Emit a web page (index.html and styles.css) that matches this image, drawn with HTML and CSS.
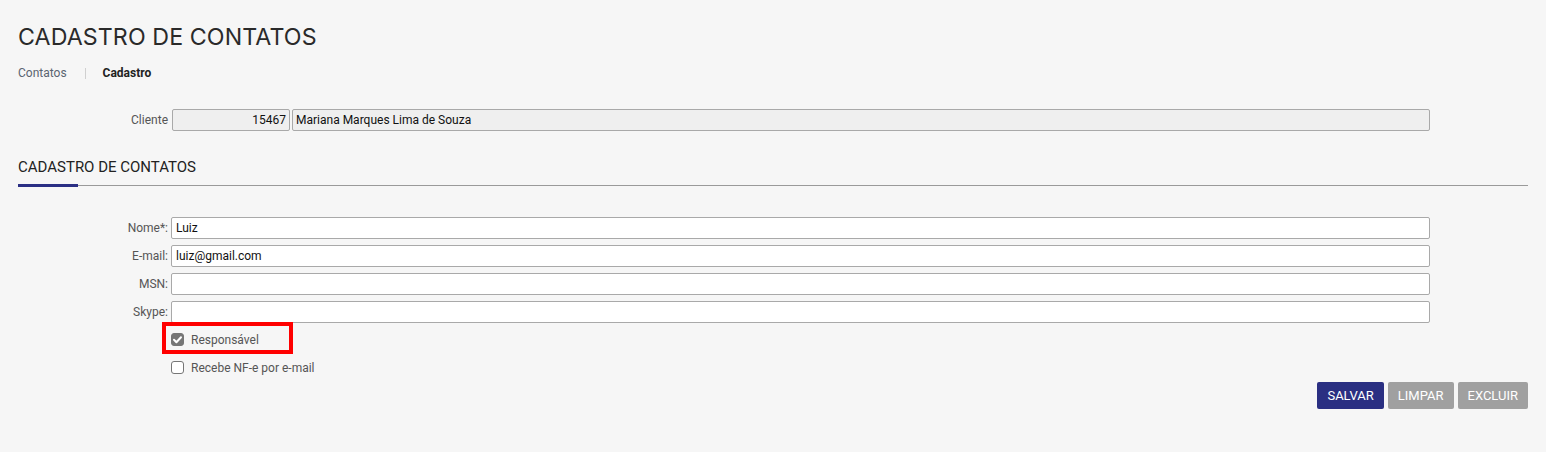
FILE: index.html
```html
<!DOCTYPE html>
<html lang="pt-BR">
<head>
<meta charset="utf-8">
<title>Cadastro de Contatos</title>
<link rel="stylesheet" href="styles.css">
</head>
<body>
<div class="page">
  <h1 class="title">CADASTRO DE CONTATOS</h1>
  <nav class="crumbs">
    <span class="crumb">Contatos</span>
    <span class="sep"></span>
    <span class="crumb current">Cadastro</span>
  </nav>

  <div class="client-row">
    <label class="lbl">Cliente</label>
    <div class="field code">15467</div>
    <div class="field name">Mariana Marques Lima de Souza</div>
  </div>

  <div class="section">
    <div class="section-title">CADASTRO DE CONTATOS</div>
  </div>

  <div class="form">
    <label class="lbl">Nome*:</label>
    <div class="input">Luiz</div>
    <label class="lbl">E-mail:</label>
    <div class="input">luiz@gmail.com</div>
    <label class="lbl">MSN:</label>
    <div class="input"></div>
    <label class="lbl">Skype:</label>
    <div class="input"></div>
    <div class="checks">
      <div class="check-row highlighted">
        <span class="box checked"><svg viewBox="0 0 13 13" width="13" height="13"><path d="M3 6.8 L5.4 9.2 L10 4.2" fill="none" stroke="#fff" stroke-width="2" stroke-linecap="round" stroke-linejoin="round"/></svg></span>
        <span class="check-text">Responsável</span>
        <span class="mark"></span>
      </div>
      <div class="check-row">
        <span class="box"></span>
        <span class="check-text">Recebe NF-e por e-mail</span>
      </div>
    </div>
  </div>

  <div class="actions">
    <button class="btn primary">SALVAR</button>
    <button class="btn">LIMPAR</button>
    <button class="btn">EXCLUIR</button>
  </div>
</div>
</body>
</html>
```

FILE: styles.css
```css
* { box-sizing: border-box; }
html, body { margin: 0; padding: 0; }
body {
  background: #f6f6f6;
  font-family: Roboto, "Liberation Sans", sans-serif;
  color: #222;
}
.page {
  padding: 23px 18px 0 18px;
}
.title {
  margin: 0;
  font-family: Inter, "Noto Sans", sans-serif;
  font-weight: 400;
  font-size: 23.2px;
  line-height: 28px;
  color: #2a2a2a;
  letter-spacing: 0.1px;
}
.crumbs {
  display: flex;
  align-items: center;
  margin-top: 15px;
  font-family: Roboto, "Liberation Sans", sans-serif;
  font-size: 12px;
  line-height: 14px;
}
.crumb { color: #5a6470; }
.crumb.current { color: #222; font-weight: 700; }
.sep {
  width: 1px;
  height: 11px;
  background: #d0d0d0;
  margin: 0 17px 0 18px;
}
.client-row {
  display: flex;
  align-items: center;
  margin-top: 29px;
  width: 1412px;
}
.lbl {
  font-size: 12px;
  color: #555;
  text-align: right;
}
.client-row .lbl {
  width: 150px;
  margin-right: 4px;
}
.field {
  height: 22px;
  border: 1px solid #a9a9a9;
  border-radius: 2px;
  background: #efefef;
  font-size: 12px;
  line-height: 20px;
  padding: 0 3px;
  color: #111;
}
.field.code { width: 118px; text-align: right; }
.field.name { flex: 1; margin-left: 2px; }

.section {
  margin-top: 27px;
  border-bottom: 1px solid #9a9a9a;
}
.section-title {
  font-size: 15px;
  line-height: 18px;
  color: #222;
  padding-bottom: 8px;
  width: 60px;
  white-space: nowrap;
  border-bottom: 3px solid #2b2f84;
  margin-bottom: -2px;
}

.form {
  display: grid;
  grid-template-columns: 150px 1fr;
  column-gap: 3px;
  row-gap: 6px;
  width: 1412px;
  margin-top: 31px;
  align-items: center;
}
.input {
  height: 22px;
  border: 1px solid #a9a9a9;
  border-radius: 2px;
  background: #fff;
  font-size: 12px;
  line-height: 20px;
  padding: 0 4px;
  color: #111;
}
.checks {
  grid-column: 2;
  display: flex;
  flex-direction: column;
  gap: 15px;
  margin-top: 4px;
}
.check-row {
  display: flex;
  align-items: center;
  height: 13px;
  position: relative;
}
.box {
  width: 13px;
  height: 13px;
  border: 1px solid #767676;
  border-radius: 3px;
  background: #fff;
  display: block;
}
.box.checked {
  background: #767676;
  border-color: #767676;
}
.box svg { display: block; margin: -1px; }
.check-text {
  margin-left: 7px;
  font-size: 12px;
  color: #555;
}
.mark {
  position: absolute;
  left: -9px;
  top: -11px;
  width: 131px;
  height: 32px;
  border: 4px solid #f00;
}
.actions {
  display: flex;
  justify-content: flex-end;
  gap: 4px;
  margin-top: 8px;
}
.btn {
  height: 27px;
  border: none;
  border-radius: 2px;
  background: #a0a0a0;
  color: #fff;
  font-family: Roboto, "Liberation Sans", sans-serif;
  font-size: 13px;
  padding: 0 10px;
  cursor: pointer;
}
.btn.primary { background: #2a2f82; }
```
